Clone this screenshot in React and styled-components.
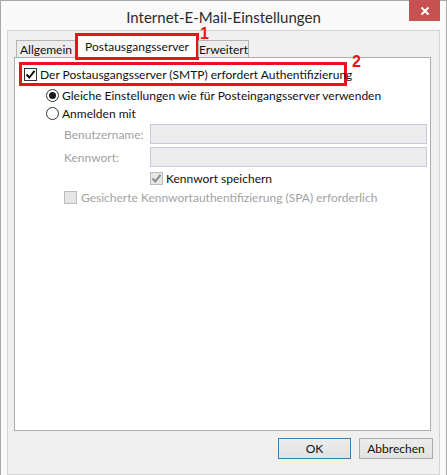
import React from 'react';
import styled, { createGlobalStyle } from 'styled-components';

const GlobalStyle = createGlobalStyle`
  html, body { margin: 0; padding: 0; background: #ffffff; }
  * { box-sizing: border-box; }
`;

const Window = styled.div`
  width: 447px;
  height: 475px;
  border: 1px solid #a9a9a9;
  border-bottom: none;
  background: #f9f9f9;
  padding: 0 6px;
  display: flex;
  flex-direction: column;
  font-family: Lato, "Noto Sans", sans-serif;
  font-size: 12px;
  color: #111;
`;

const TitleBar = styled.div`
  height: 29px;
  display: grid;
  grid-template-columns: 1fr auto 1fr;
  align-items: center;
`;

const Title = styled.div`
  grid-column: 2;
  font-size: 15px;
  color: #2b2b2b;
  padding-top: 2px;
`;

const CloseButton = styled.div`
  grid-column: 3;
  justify-self: end;
  align-self: start;
  margin-top: -1px;
  width: 31px;
  height: 21px;
  background: #c75050;
  display: flex;
  align-items: center;
  justify-content: center;
`;

const Client = styled.div`
  flex: 1;
  border: 1px solid #d4d4d4;
  background: #f0f0f0;
  padding: 0 6px;
  display: flex;
  flex-direction: column;
`;

const TabStrip = styled.div`
  height: 26px;
  display: flex;
  align-items: flex-end;
  padding-left: 2px;
  position: relative;
  z-index: 1;
`;

const Tab = styled.div`
  height: ${p => (p.$active ? '27px' : '17px')};
  width: ${p => p.$w}px;
  margin-left: ${p => (p.$first ? 0 : -1)}px;
  margin-bottom: ${p => (p.$active ? '-3px' : '0')};
  border: ${p => (p.$active ? '3px solid #e8141c' : '1px solid #b4b4b4')};
  border-bottom: ${p => (p.$active ? '3px solid #e8141c' : 'none')};
  background: ${p => (p.$active ? '#ffffff' : '#ececec')};
  display: flex;
  align-items: center;
  justify-content: center;
  padding-top: ${p => (p.$active ? '0' : '1px')};
  position: relative;
  white-space: nowrap;
`;

const Marker = styled.span`
  position: absolute;
  top: ${p => p.$top}px;
  right: ${p => p.$right}px;
  font-family: "Liberation Sans", Arial, sans-serif;
  font-weight: bold;
  font-size: 16px;
  line-height: 1;
  color: #e8141c;
`;

const Panel = styled.div`
  height: 374px;
  margin-right: 2px;
  border: 1px solid #adadad;
  background: #ffffff;
  padding: 4px 0 0 4px;
  display: flex;
  flex-direction: column;
`;

const Highlight = styled.div`
  width: 328px;
  height: 24px;
  border: 3px solid #e8141c;
  padding-left: 2px;
  display: flex;
  align-items: center;
  gap: 3px;
  position: relative;
  white-space: nowrap;
`;

const Row = styled.div`
  height: ${p => p.$h || 18}px;
  margin-left: ${p => p.$indent || 0}px;
  margin-top: ${p => p.$mt || 0}px;
  display: flex;
  align-items: center;
  gap: ${p => p.$gap || 3}px;
  white-space: nowrap;
  color: ${p => (p.$disabled ? '#a2a2a2' : '#111')};
`;

const Box = styled.span`
  width: 13px;
  height: 13px;
  flex: none;
  border: 1px solid ${p => (p.$disabled ? '#bcbcbc' : '#333333')};
  background: ${p => (p.$disabled ? '#e6e6e6' : '#ffffff')};
  display: flex;
  align-items: center;
  justify-content: center;
`;

const Radio = styled.span`
  width: 13px;
  height: 13px;
  flex: none;
  border-radius: 50%;
  border: 1px solid #333333;
  background: #ffffff;
  display: flex;
  align-items: center;
  justify-content: center;
  &::after {
    content: '';
    display: ${p => (p.$checked ? 'block' : 'none')};
    width: 7px;
    height: 7px;
    border-radius: 50%;
    background: #1a1a1a;
  }
`;

const Fields = styled.div`
  margin: 2px 0 0 45px;
  display: grid;
  grid-template-columns: 86px 277px;
  row-gap: 3px;
  align-items: center;
  color: #a2a2a2;
`;

const Input = styled.div`
  height: 20px;
  border: 1px solid #c3ccd8;
  background: #ececec;
`;

const ButtonRow = styled.div`
  margin-top: 7px;
  display: flex;
  justify-content: flex-end;
  gap: 8px;
`;

const Button = styled.div`
  width: ${p => p.$w}px;
  height: 21px;
  border: 1px solid ${p => (p.$default ? '#3c7fb1' : '#acacac')};
  background: linear-gradient(#ececec, #e2e2e2);
  display: flex;
  align-items: center;
  justify-content: center;
  color: #111;
`;

const Check = ({ color }) => (
  <svg width="11" height="11" viewBox="0 0 11 11">
    <path d="M1.5 5.5 L4.3 8.5 L9.5 1.8" fill="none" stroke={color} strokeWidth="2" />
  </svg>
);

export default function App() {
  return (
    <>
      <GlobalStyle />
      <Window>
        <TitleBar>
          <Title>Internet-E-Mail-Einstellungen</Title>
          <CloseButton>
            <svg width="10" height="10" viewBox="0 0 10 10">
              <path d="M1.5 1.5 L8.5 8.5 M8.5 1.5 L1.5 8.5" stroke="#ffffff" strokeWidth="2" />
            </svg>
          </CloseButton>
        </TitleBar>
        <Client>
          <TabStrip>
            <Tab $first $w={60}>Allgemein</Tab>
            <Tab $active $w={124}>
              Postausgangsserver
              <Marker $top={-10} $right={-13}>1</Marker>
            </Tab>
            <Tab $w={51}>Erweitert</Tab>
          </TabStrip>
          <Panel>
            <Highlight>
              <Box><Check color="#111" /></Box>
              Der Postausgangsserver (SMTP) erfordert Authentifizierung
              <Marker $top={-11} $right={-17}>2</Marker>
            </Highlight>
            <Row $indent={27}>
              <Radio $checked />
              Gleiche Einstellungen wie für Posteingangsserver verwenden
            </Row>
            <Row $indent={27}>
              <Radio />
              Anmelden mit
            </Row>
            <Fields>
              <span>Benutzername:</span>
              <Input />
              <span>Kennwort:</span>
              <Input />
            </Fields>
            <Row $indent={131} $mt={3} $h={17}>
              <Box $disabled><Check color="#8a8a8a" /></Box>
              <span style={{ color: '#111' }}>Kennwort speichern</span>
            </Row>
            <Row $indent={45} $mt={2} $h={17} $gap={4} $disabled>
              <Box $disabled />
              Gesicherte Kennwortauthentifizierung (SPA) erforderlich
            </Row>
          </Panel>
          <ButtonRow>
            <Button $default $w={73}>OK</Button>
            <Button $w={74}>Abbrechen</Button>
          </ButtonRow>
        </Client>
      </Window>
    </>
  );
}
